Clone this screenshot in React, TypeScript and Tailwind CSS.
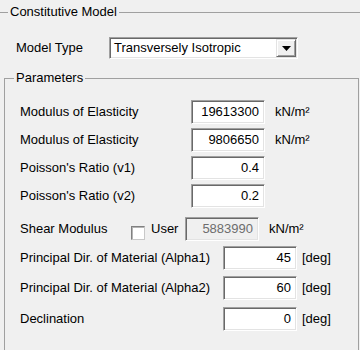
import React from "react";

const sunken =
  "border border-t-[#a0a0a0] border-l-[#a0a0a0] border-b-white border-r-white shadow-[inset_1px_1px_0_#696969,inset_-1px_-1px_0_#e3e3e3]";

type BoxProps = {
  value: string;
  disabled?: boolean;
};

function NumBox({ value, disabled }: BoxProps) {
  return (
    <div
      className={`w-[74px] h-[24px] flex items-center justify-end pr-[5px] ${sunken} ${
        disabled ? "bg-[#f0f0f0] text-[#6d6d6d]" : "bg-white"
      }`}
    >
      {value}
    </div>
  );
}

type RowProps = {
  label: string;
  value: string;
  unit?: string;
  wide?: boolean;
  mt: string;
};

function Row({ label, value, unit, wide, mt }: RowProps) {
  return (
    <div className={`flex items-center h-[24px] pl-[15px] ${mt}`}>
      <span className={wide ? "w-[203px]" : "w-[171px]"}>{label}</span>
      <NumBox value={value} />
      {unit && (
        <span className={wide ? "ml-[5px]" : "ml-[10px]"}>{unit}</span>
      )}
    </div>
  );
}

export default function App() {
  return (
    <div className="w-[360px] h-[350px] overflow-hidden bg-[#f0f0f0] pt-[4px] font-['Liberation_Sans',Arial,sans-serif] text-[13px] text-black">
      <fieldset className="m-0 p-0 min-w-0 border-0 border-t border-[#a0a0a0]">
        <legend className="ml-[8px] px-[2px] leading-[16px]">Constitutive Model</legend>

        <div className="flex items-center pl-[16px] mt-[17px]">
          <span className="w-[93px]">Model Type</span>
          <div className={`w-[189px] h-[22px] flex items-stretch bg-white p-px ${sunken}`}>
            <span className="flex-1 flex items-center pl-[3px]">Transversely Isotropic</span>
            <div className="w-[20px] flex items-center justify-center bg-[#f0f0f0] border border-t-[#e3e3e3] border-l-[#e3e3e3] border-b-[#696969] border-r-[#696969] shadow-[inset_1px_1px_0_#ffffff,inset_-1px_-1px_0_#a0a0a0]">
              <svg width="9" height="5" viewBox="0 0 9 5">
                <polygon points="0,0 9,0 4.5,5" fill="#000" />
              </svg>
            </div>
          </div>
        </div>

        <fieldset className="mt-[11px] ml-[4px] w-[355px] min-w-0 p-0 pb-[40px] border border-[#a0a0a0]">
          <legend className="ml-[9px] px-[2px] leading-[16px]">Parameters</legend>

          <Row label="Modulus of Elasticity" value="19613300" unit="kN/m²" mt="mt-[14px]" />
          <Row label="Modulus of Elasticity" value="9806650" unit="kN/m²" mt="mt-[4px]" />
          <Row label="Poisson's Ratio (v1)" value="0.4" mt="mt-[4px]" />
          <Row label="Poisson's Ratio (v2)" value="0.2" mt="mt-[4px]" />

          <div className="flex items-center h-[24px] pl-[15px] mt-[9px]">
            <span className="w-[111px]">Shear Modulus</span>
            <span className="self-start mt-[9px] w-[14px] h-[14px] shrink-0 bg-white border border-t-[#808080] border-l-[#808080] border-b-[#c8c8c8] border-r-[#c8c8c8] shadow-[inset_1px_1px_0_#b4b4b4]" />
            <span className="w-[40px] pl-[6px]">User</span>
            <NumBox value="5883990" disabled />
            <span className="ml-[10px]">kN/m²</span>
          </div>

          <Row label="Principal Dir. of Material (Alpha1)" value="45" unit="[deg]" wide mt="mt-[5px]" />
          <Row label="Principal Dir. of Material (Alpha2)" value="60" unit="[deg]" wide mt="mt-[6px]" />
          <Row label="Declination" value="0" unit="[deg]" wide mt="mt-[7px]" />
        </fieldset>
      </fieldset>
    </div>
  );
}
